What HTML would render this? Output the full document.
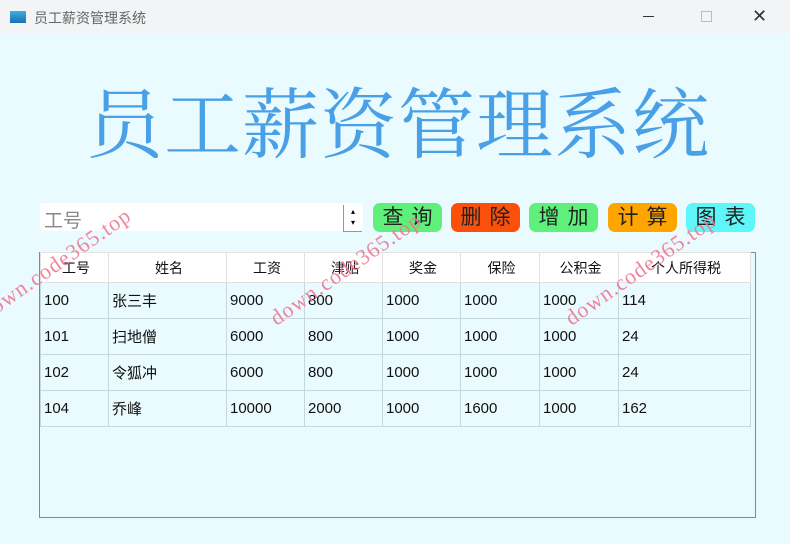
<!DOCTYPE html><html><head><meta charset="utf-8"><style>
body{margin:0;width:790px;height:544px;background:#e9fbfe;position:relative;overflow:hidden;font-family:"Liberation Sans","Noto Sans CJK SC",sans-serif}
.tb{position:absolute;left:0;top:0;width:790px;height:33px;background:#f2f4f5}
.tb .t{position:absolute;left:34px;top:8px;font-size:14px;color:#666}
.ic{position:absolute;left:10px;top:11px;width:16px;height:12px;background:linear-gradient(#3fb0e0,#1a70b0)}
.h1{position:absolute;left:0;width:796px;top:64px;text-align:center;font-family:"Liberation Serif","Noto Serif CJK SC",serif;font-size:77px;color:#4aa0e6;letter-spacing:1px}
.inp{position:absolute;left:40px;top:203px;width:323px;height:28px;background:#fff;border-radius:3px}
.inp span{position:absolute;left:4px;top:3px;font-size:19px;color:#888}
.sp{position:absolute;left:343px;top:205px;width:18px;height:26px;border-left:1px solid #999;border-bottom:1px solid #999}
.btn{position:absolute;top:203px;width:69px;height:29px;border-radius:7px;font-size:21px;text-align:center;line-height:29px;letter-spacing:8px;text-indent:8px;color:#222}
table{position:absolute;left:40px;top:252px;border-collapse:collapse;font-size:15px}
.wrap{position:absolute;left:39px;top:252px;width:715px;height:264px;border:1px solid #888;background:#e9fbfe}
td{border:1px solid #c7d8dd;height:35px;padding:0 0 0 3px;color:#111}
tr.hd td{height:29px;background:#fff;text-align:center;border-color:#e2e2e2;font-size:14px}
.wm{position:absolute;color:#f07895;font-family:"Liberation Serif",serif;font-size:22px;transform:rotate(-35deg);transform-origin:left bottom;letter-spacing:1px;opacity:.9}
</style></head><body>
<div class="tb"><div class="ic"></div><div class="t">员工薪资管理系统</div>
<div style="position:absolute;left:643px;top:16px;width:11px;height:1px;background:#333"></div>
<div style="position:absolute;left:701px;top:11px;width:9px;height:9px;border:1px solid #bbb"></div>
<div style="position:absolute;left:752px;top:6px;font-size:18px;color:#333">✕</div></div>
<div class="h1">员工薪资管理系统</div>
<div class="inp"><span>工号</span></div><div class="sp"><div style="position:absolute;left:7px;top:2px;font-size:8px">▴</div><div style="position:absolute;left:7px;top:13px;font-size:8px">▾</div></div>
<div class="btn" style="left:373px;background:#5ef07a">查询</div>
<div class="btn" style="left:451px;background:#fb4f0c">删除</div>
<div class="btn" style="left:529px;background:#5ef07a">增加</div>
<div class="btn" style="left:608px;background:#ffa500">计算</div>
<div class="btn" style="left:686px;background:#5ef6f8">图表</div>
<div class="wrap"></div>
<table>
<colgroup><col style="width:68px"><col style="width:118px"><col style="width:78px"><col style="width:78px"><col style="width:78px"><col style="width:79px"><col style="width:79px"><col style="width:132px"></colgroup>
<tr class="hd"><td>工号</td><td>姓名</td><td>工资</td><td>津贴</td><td>奖金</td><td>保险</td><td>公积金</td><td>个人所得税</td></tr>
<tr><td>100</td><td>张三丰</td><td>9000</td><td>800</td><td>1000</td><td>1000</td><td>1000</td><td>114</td></tr>
<tr><td>101</td><td>扫地僧</td><td>6000</td><td>800</td><td>1000</td><td>1000</td><td>1000</td><td>24</td></tr>
<tr><td>102</td><td>令狐冲</td><td>6000</td><td>800</td><td>1000</td><td>1000</td><td>1000</td><td>24</td></tr>
<tr><td>104</td><td>乔峰</td><td>10000</td><td>2000</td><td>1000</td><td>1600</td><td>1000</td><td>162</td></tr>
</table>
<div class="wm" style="left:-10px;top:300px">down.code365.top</div>
<div class="wm" style="left:280px;top:305px">down.code365.top</div>
<div class="wm" style="left:575px;top:305px">down.code365.top</div>
</body></html>
